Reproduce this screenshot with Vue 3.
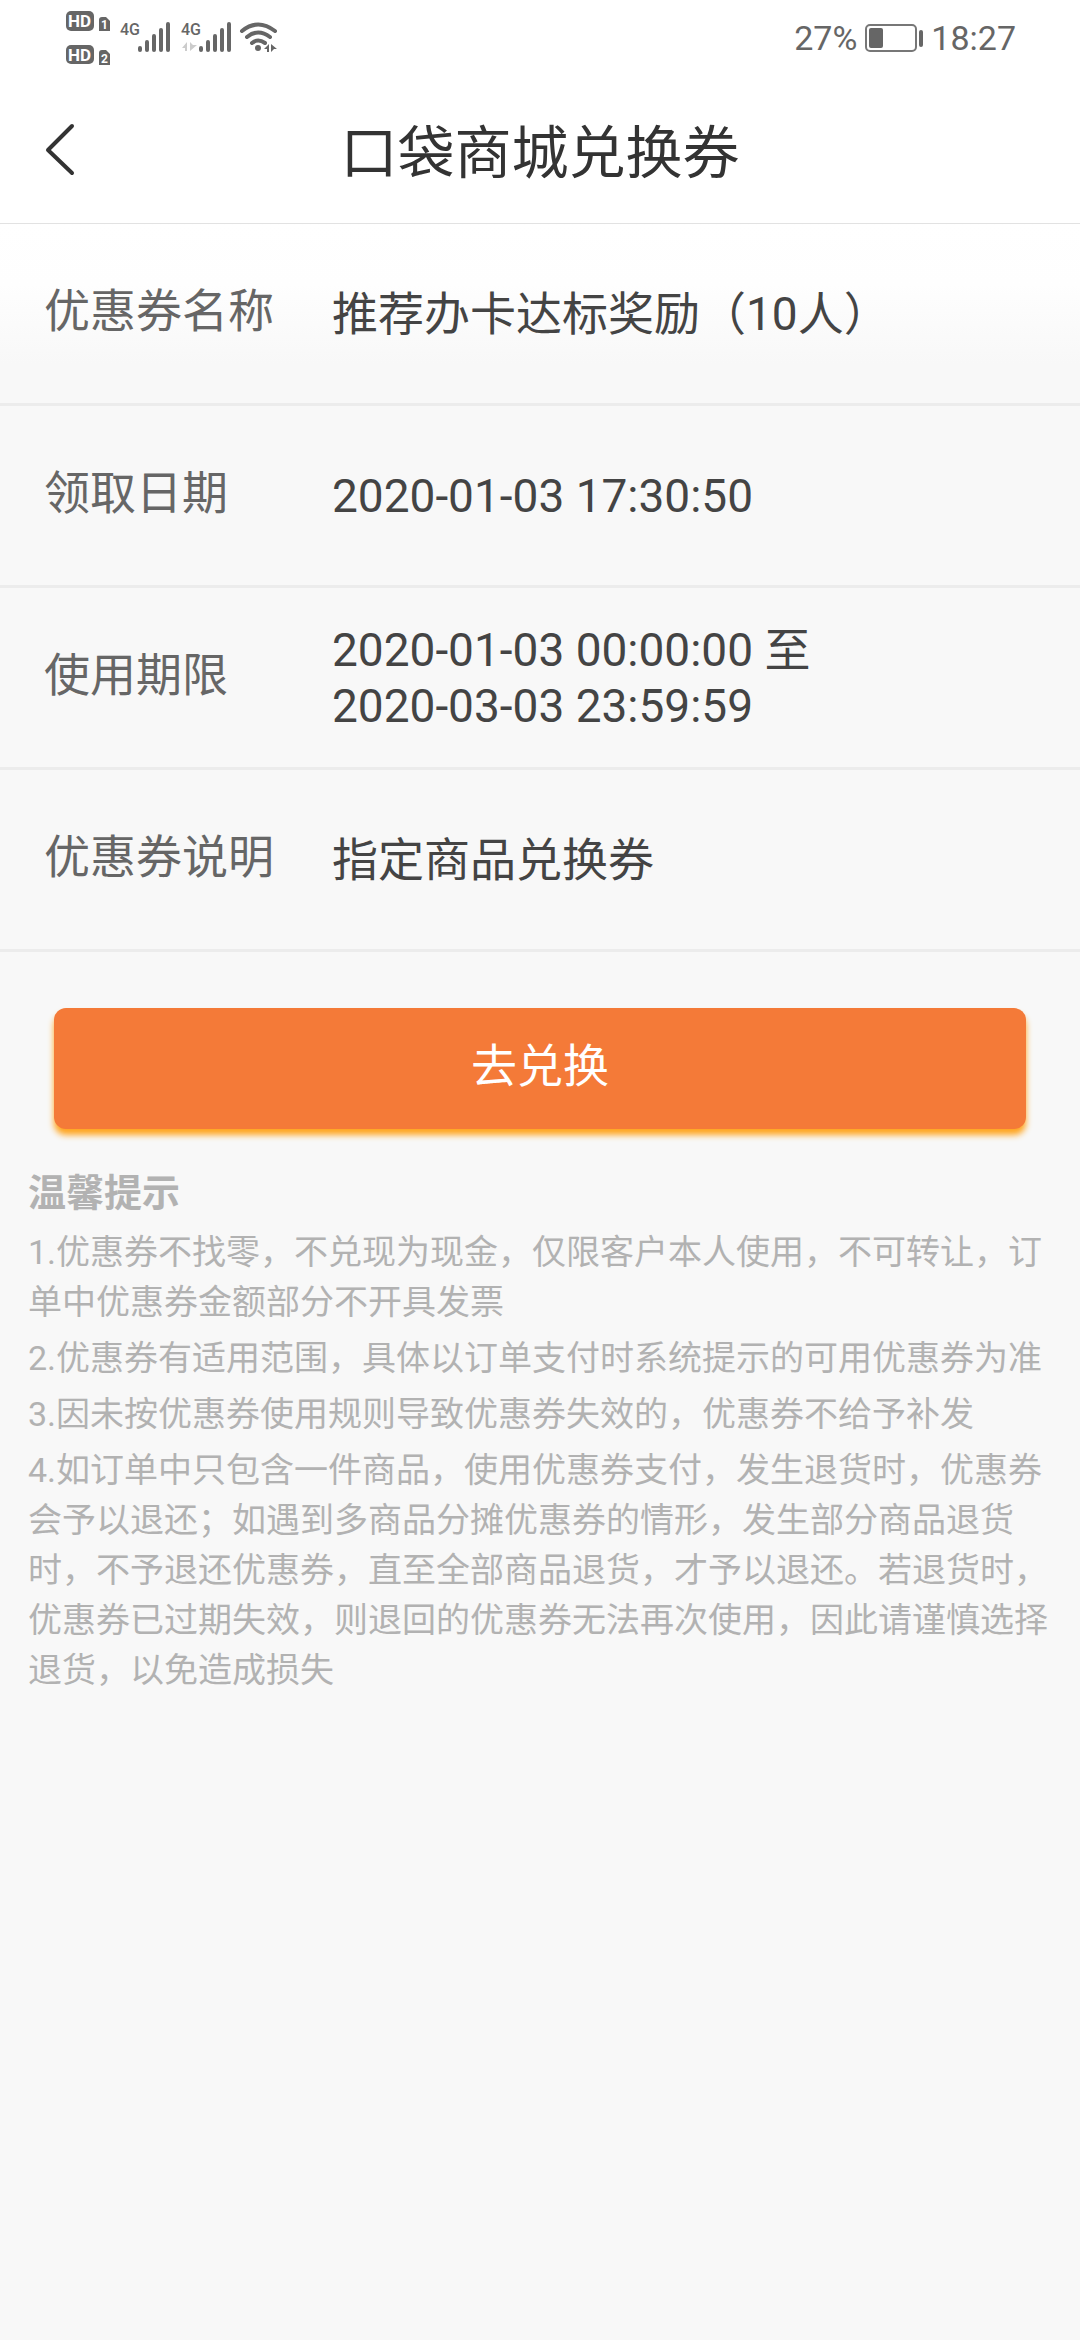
<script setup>
const watermark = '11351578047246278'

const details = [
  { label: '优惠券名称', lines: ['推荐办卡达标奖励（10人）'] },
  { label: '领取日期', lines: ['2020-01-03 17:30:50'] },
  { label: '使用期限', lines: ['2020-01-03 00:00:00 至', '2020-03-03 23:59:59'] },
  { label: '优惠券说明', lines: ['指定商品兑换券'] },
]

const tips = [
  '1.优惠券不找零，不兑现为现金，仅限客户本人使用，不可转让，订单中优惠券金额部分不开具发票',
  '2.优惠券有适用范围，具体以订单支付时系统提示的可用优惠券为准',
  '3.因未按优惠券使用规则导致优惠券失效的，优惠券不给予补发',
  '4.如订单中只包含一件商品，使用优惠券支付，发生退货时，优惠券会予以退还；如遇到多商品分摊优惠券的情形，发生部分商品退货时，不予退还优惠券，直至全部商品退货，才予以退还。若退货时，优惠券已过期失效，则退回的优惠券无法再次使用，因此请谨慎选择退货，以免造成损失',
]
</script>

<template>
  <div class="page">
    <div class="status">
      <svg class="signals" width="220" height="75" viewBox="60 0 220 75" aria-hidden="true">
        <g fill="#666">
          <rect x="66" y="11" width="28" height="20" rx="5" />
          <path d="M99 20q0-3 3-3h4l4 4v10H99z" />
          <rect x="66" y="45" width="28" height="19" rx="5" />
          <path d="M99 53q0-3 3-3h4l4 4v11H99z" />
          <text x="120" y="35" class="net">4G</text>
          <text x="181" y="35" class="net">4G</text>
          <circle cx="258" cy="48" r="3" />
          <path d="M264 49l5-5v8h-2v-3zM271 44l6 5h-3l-3 3z" />
        </g>
        <g fill="#fff">
          <text x="68" y="27" class="hd">HD</text>
          <text x="68" y="61" class="hd">HD</text>
          <text x="101" y="29" class="sim">1</text>
          <text x="101" y="63" class="sim">2</text>
        </g>
        <path d="M182 48l5-6v9h-2v-3zM190 42v9l7-6h-4z" fill="#ccc" />
        <g stroke="#666" stroke-width="4" stroke-linecap="round" fill="none">
          <path d="M140 48v2M147 42v8M154 36v14M161 30v20M168 24v26" />
          <path d="M201 48v2M208 42v8M215 36v14M222 30v20M229 24v26" />
          <path d="M242 31q16-13 33 0M247 37q11-9 23 0M252 43q6-5 13 0" />
        </g>
      </svg>
      <div class="power">
        <span>27%</span>
        <svg width="58" height="28" viewBox="0 0 58 28" aria-hidden="true">
          <rect x="1" y="1" width="50" height="26" rx="4" fill="#fff" stroke="#777" stroke-width="2" />
          <rect x="4" y="4" width="14" height="20" rx="2" fill="#666" />
          <rect x="54" y="6" width="4" height="17" rx="2" fill="#666" />
        </svg>
        <span>18:27</span>
      </div>
    </div>

    <header class="header">
      <button class="back" type="button" aria-label="返回">
        <svg width="32" height="54" viewBox="0 0 32 54" fill="none" stroke="#333" stroke-width="4" stroke-linecap="round" stroke-linejoin="round">
          <path d="M28 4L4 28l24 23" />
        </svg>
      </button>
      <h1>口袋商城兑换券</h1>
    </header>

    <main class="content">
      <dl class="details">
        <div v-for="item in details" :key="item.label" class="row">
          <dt>{{ item.label }}</dt>
          <dd>
            <div v-for="line in item.lines" :key="line">{{ line }}</div>
          </dd>
        </div>
      </dl>

      <button class="redeem" type="button">去兑换</button>

      <section class="tips">
        <h2>温馨提示</h2>
        <p v-for="tip in tips" :key="tip">{{ tip }}</p>
      </section>
    </main>

    <span class="mark mark-top" aria-hidden="true">{{ watermark }}</span>
    <span class="mark mark-left" aria-hidden="true">{{ watermark }}</span>
    <span class="mark mark-right" aria-hidden="true">{{ watermark }}</span>
    <span class="mark mark-bottom" aria-hidden="true">{{ watermark }}</span>
  </div>
</template>

<style>
body {
  background: #f8f8f8;
}
</style>

<style scoped>
.page {
  position: relative;
  min-height: 100vh;
  overflow: hidden;
  background: #f8f8f8;
  font-family: Roboto, "Noto Sans CJK SC", sans-serif;
  color: #444;
}

.status {
  display: flex;
  align-items: flex-start;
  justify-content: space-between;
  height: 75px;
  padding: 0 64px 0 60px;
  background: #fff;
}

.signals {
  display: block;
}

.net {
  font-size: 16px;
  font-weight: 500;
}

.hd {
  font-size: 17px;
  font-weight: 700;
}

.sim {
  font-size: 12px;
  font-weight: 700;
}

.power {
  display: flex;
  align-items: center;
  gap: 8px;
  height: 75px;
  font-size: 34px;
  color: #666;
}

.header {
  display: grid;
  grid-template-columns: 120px 1fr 120px;
  align-items: center;
  height: 148px;
  border-bottom: 1px solid #e2e2e2;
  background: #fff;
}

.back {
  display: flex;
  padding: 0 0 0 44px;
  border: 0;
  background: none;
}

h1 {
  margin: 0;
  padding-top: 10px;
  font-size: 57px;
  font-weight: 400;
  line-height: 80px;
  text-align: center;
  color: #333;
}

.content {
  background: linear-gradient(#fff, #fefefe 60px, #f8f8f8 140px);
}

.details {
  margin: 0;
}

.row {
  display: flex;
  align-items: center;
  box-sizing: border-box;
  min-height: 182px;
  padding: 0 44px;
  border-bottom: 3px solid #ececec;
  font-size: 46px;
  line-height: 56px;
}

dt {
  flex: 0 0 288px;
  padding-bottom: 6px;
  color: #666;
}

dd {
  flex: 1;
  margin: 0;
}

.redeem {
  display: block;
  width: calc(100% - 108px);
  height: 121px;
  margin: 56px auto 0;
  padding: 0 0 14px;
  border: 0;
  border-radius: 12px;
  background: #f47a38;
  box-shadow: 0 6px 6px #ffa51f;
  font-family: inherit;
  font-size: 46px;
  color: #fff;
}

.tips {
  padding: 36px 20px 40px 28px;
  color: #b2b2b2;
}

h2 {
  margin: 0 0 6px;
  font-size: 38px;
  font-weight: 700;
  line-height: 56px;
}

p {
  margin: 0 0 6px;
  font-size: 34px;
  line-height: 50px;
}

.mark {
  position: absolute;
  font-size: 46px;
  line-height: 46px;
  color: rgba(0, 0, 0, 0.016);
  white-space: nowrap;
  pointer-events: none;
}

.mark-top {
  top: 229px;
  right: 0;
}

.mark-left {
  top: 232px;
  left: 42px;
  writing-mode: vertical-rl;
}

.mark-right {
  top: 954px;
  right: 38px;
  writing-mode: vertical-rl;
}

.mark-bottom {
  right: 0;
  bottom: 142px;
}
</style>
